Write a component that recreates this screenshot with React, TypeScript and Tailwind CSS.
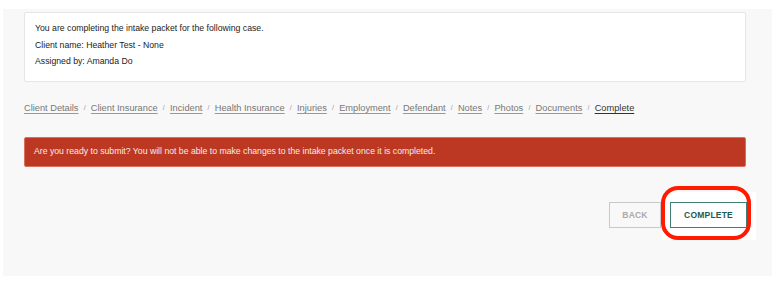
import React from "react";

const crumbs = [
  "Client Details",
  "Client Insurance",
  "Incident",
  "Health Insurance",
  "Injuries",
  "Employment",
  "Defendant",
  "Notes",
  "Photos",
  "Documents",
];

export default function App() {
  return (
    <div
      className="w-[777px] h-[281px] bg-white pt-[9px] pl-[3px]"
      style={{ fontFamily: '"Liberation Sans", Arial, sans-serif' }}
    >
      <div className="w-[769px] h-[267px] bg-[#f8f8f8] pt-[3px] pl-[21px] pr-[26px]">
        <div className="h-[70px] bg-white border border-[#e6e6e6] rounded-[2px] pt-[7px] pl-[10px] text-[8.7px] leading-[16.5px] text-[#222]">
          <div>You are completing the intake packet for the following case.</div>
          <div>Client name: Heather Test - None</div>
          <div>Assigned by: Amanda Do</div>
        </div>

        <div className="mt-[20px] flex items-center text-[9.25px] leading-[12px] text-[#777]">
          {crumbs.map((c) => (
            <React.Fragment key={c}>
              <span className="underline decoration-[#999] underline-offset-[1.5px]">{c}</span>
              <span className="mx-[5.2px] text-[7px] text-[#999]">/</span>
            </React.Fragment>
          ))}
          <span className="underline underline-offset-[1.5px] text-[#333]">Complete</span>
        </div>

        <div className="mt-[23px] h-[30px] bg-[#bd3822] rounded-[2px] border border-[#d8705f] flex items-center pl-[9px] text-[8.7px] text-[#f5ebe8]">
          Are you ready to submit? You will not be able to make changes to the intake packet once it is completed.
        </div>

        <div className="mt-[35px] flex justify-end">
          <div className="relative flex gap-[9px]">
            <div className="absolute left-[53px] top-[-10px] w-[94px] h-[48px] bg-white" />
            <button className="relative w-[52px] h-[26px] border-[1.5px] border-[#c8c8c8] bg-transparent text-[8.5px] font-bold text-[#aaa] tracking-[0.2px]">
              BACK
            </button>
            <button className="relative w-[77px] h-[26px] mr-[-1px] border-[1.5px] border-[#3e7e74] bg-white text-[8.5px] font-bold text-[#1f5a50] tracking-[0.2px]">
              COMPLETE
            </button>
            <div className="absolute left-[52px] top-[-16px] w-[90px] h-[54px] rounded-[17px] border-[4px] border-[#ff1a00] pointer-events-none" />
          </div>
        </div>
      </div>
    </div>
  );
}
